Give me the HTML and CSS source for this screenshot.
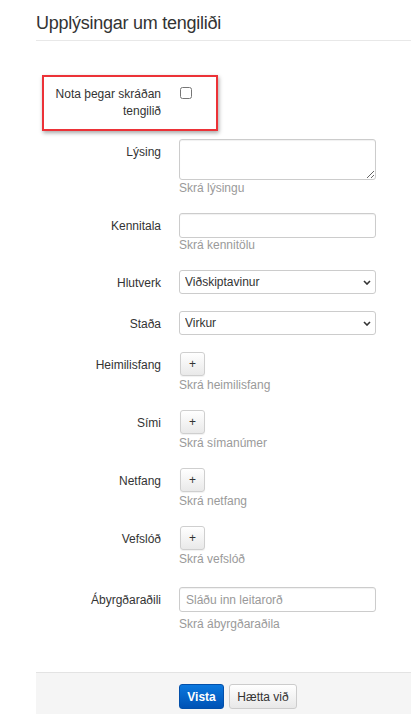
FILE: index.html
```html
<!DOCTYPE html>
<html lang="is">
<head>
<meta charset="utf-8">
<title>Upplýsingar um tengiliði</title>
<link rel="stylesheet" href="styles.css">
</head>
<body>
<div class="page">
  <h1 class="page-title">Upplýsingar um tengiliði</h1>
  <form class="form">
    <div class="form-group form-group--highlight">
      <label class="control-label">Nota þegar skráðan tengilið</label>
      <div class="controls"><input type="checkbox" class="checkbox"></div>
    </div>
    <div class="form-group">
      <label class="control-label">Lýsing</label>
      <div class="controls">
        <textarea class="field field--area"></textarea>
        <div class="help help--area">Skrá lýsingu</div>
      </div>
    </div>
    <div class="form-group">
      <label class="control-label">Kennitala</label>
      <div class="controls">
        <input type="text" class="field">
        <div class="help">Skrá kennitölu</div>
      </div>
    </div>
    <div class="form-group form-group--select">
      <label class="control-label">Hlutverk</label>
      <div class="controls">
        <div class="select-wrap">
          <select class="field field--select"><option>Viðskiptavinur</option></select>
          <svg class="chevron" viewBox="0 0 8 5" width="8" height="5"><path d="M1 1l3 3 3-3" fill="none" stroke="#333" stroke-width="1.6"/></svg>
        </div>
      </div>
    </div>
    <div class="form-group form-group--select">
      <label class="control-label">Staða</label>
      <div class="controls">
        <div class="select-wrap">
          <select class="field field--select"><option>Virkur</option></select>
          <svg class="chevron" viewBox="0 0 8 5" width="8" height="5"><path d="M1 1l3 3 3-3" fill="none" stroke="#333" stroke-width="1.6"/></svg>
        </div>
      </div>
    </div>
    <div class="form-group">
      <label class="control-label">Heimilisfang</label>
      <div class="controls">
        <button type="button" class="btn btn--add">+</button>
        <div class="help help--btn">Skrá heimilisfang</div>
      </div>
    </div>
    <div class="form-group">
      <label class="control-label">Sími</label>
      <div class="controls">
        <button type="button" class="btn btn--add">+</button>
        <div class="help help--btn">Skrá símanúmer</div>
      </div>
    </div>
    <div class="form-group">
      <label class="control-label">Netfang</label>
      <div class="controls">
        <button type="button" class="btn btn--add">+</button>
        <div class="help help--btn">Skrá netfang</div>
      </div>
    </div>
    <div class="form-group">
      <label class="control-label">Vefslóð</label>
      <div class="controls">
        <button type="button" class="btn btn--add">+</button>
        <div class="help help--btn">Skrá vefslóð</div>
      </div>
    </div>
    <div class="form-group form-group--search">
      <label class="control-label">Ábyrgðaraðili</label>
      <div class="controls">
        <input type="text" class="field" placeholder="Sláðu inn leitarorð">
        <div class="help help--search">Skrá ábyrgðaraðila</div>
      </div>
    </div>
    <div class="form-actions">
      <button type="button" class="btn btn--primary">Vista</button>
      <button type="button" class="btn btn--default">Hætta við</button>
    </div>
  </form>
</div>
</body>
</html>
```
FILE: styles.css
```css
html, body {
  margin: 0;
  padding: 0;
  background: #fff;
}
body {
  font-family: "Liberation Sans", Arial, sans-serif;
  font-size: 12px;
  color: #333;
  overflow: hidden;
}
.page {
  padding-left: 36px;
}
.page-title {
  margin: 0;
  padding: 13px 0 6px 0;
  font-size: 18px;
  letter-spacing: -0.25px;
  line-height: 21px;
  font-weight: normal;
  color: #333;
  border-bottom: 1px solid #e8e8e8;
}
.form {
  margin: 0;
  padding-top: 40px;
}
.form-group {
  display: grid;
  grid-template-columns: 125px 197px;
  column-gap: 18px;
  margin-bottom: 17px;
}
.form-group--highlight {
  position: relative;
  margin-bottom: 19px;
}
.form-group--highlight::after {
  content: "";
  position: absolute;
  left: 6px;
  top: -6px;
  width: 176px;
  height: 56px;
  box-sizing: border-box;
  border: 2px solid #ec3237;
  box-shadow: 1px 2px 4px rgba(0, 0, 0, 0.35);
  pointer-events: none;
}
.form-group--select {
  margin-bottom: 17px;
}
.form-group--search {
  padding-top: 3px;
}
.control-label {
  text-align: right;
  padding-top: 5px;
  line-height: 17px;
  color: #333;
}
.controls {
  min-width: 0;
}
.checkbox {
  display: block;
  width: 12px;
  height: 12px;
  margin: 6px 0 0 1px;
}
.field {
  display: block;
  box-sizing: border-box;
  width: 197px;
  height: 25px;
  margin: 0;
  padding: 3px 6px;
  border: 1px solid #ccc;
  border-radius: 3px;
  background: #fff;
  font-family: "Liberation Sans", Arial, sans-serif;
  font-size: 12px;
  color: #333;
  box-shadow: inset 0 1px 1px rgba(0, 0, 0, 0.06);
}
.field::placeholder {
  color: #999;
}
.field--area {
  height: 41px;
  resize: vertical;
}
.select-wrap {
  position: relative;
  width: 197px;
}
.field--select {
  height: 24px;
  padding: 2px 5px;
  -webkit-appearance: none;
  appearance: none;
  box-shadow: none;
}
.chevron {
  position: absolute;
  right: 5px;
  top: 10px;
  pointer-events: none;
}
.help {
  line-height: 15px;
  color: #9a9a9a;
}
.help--area {
  margin-top: 1px;
}
.help--btn {
  margin-top: 2px;
}
.help--search {
  margin-top: 5px;
}
.btn {
  box-sizing: border-box;
  font-family: "Liberation Sans", Arial, sans-serif;
  font-size: 12px;
  border-radius: 3px;
  cursor: pointer;
  margin: 0;
}
.btn--add {
  display: block;
  width: 25px;
  height: 24px;
  margin-left: 1px;
  padding: 0;
  border: 1px solid #cfcfcf;
  background: linear-gradient(#ffffff, #e9e9e9);
  color: #333;
  line-height: 20px;
  box-shadow: 0 1px 1px rgba(0, 0, 0, 0.06);
}
.form-actions {
  margin-top: 40px;
  padding: 11px 0 20px 143px;
  background: #f5f5f5;
  border-top: 1px solid #e3e3e3;
  display: flex;
  gap: 5px;
}
.btn--primary {
  width: 45px;
  height: 25px;
  padding: 0;
  border: 1px solid #0350aa;
  background: linear-gradient(#0b78de, #0052b5);
  color: #fff;
  font-weight: bold;
}
.btn--default {
  width: 68px;
  height: 25px;
  padding: 0;
  border: 1px solid #cccccc;
  background: linear-gradient(#ffffff, #e8e8e8);
  color: #333;
}
```
